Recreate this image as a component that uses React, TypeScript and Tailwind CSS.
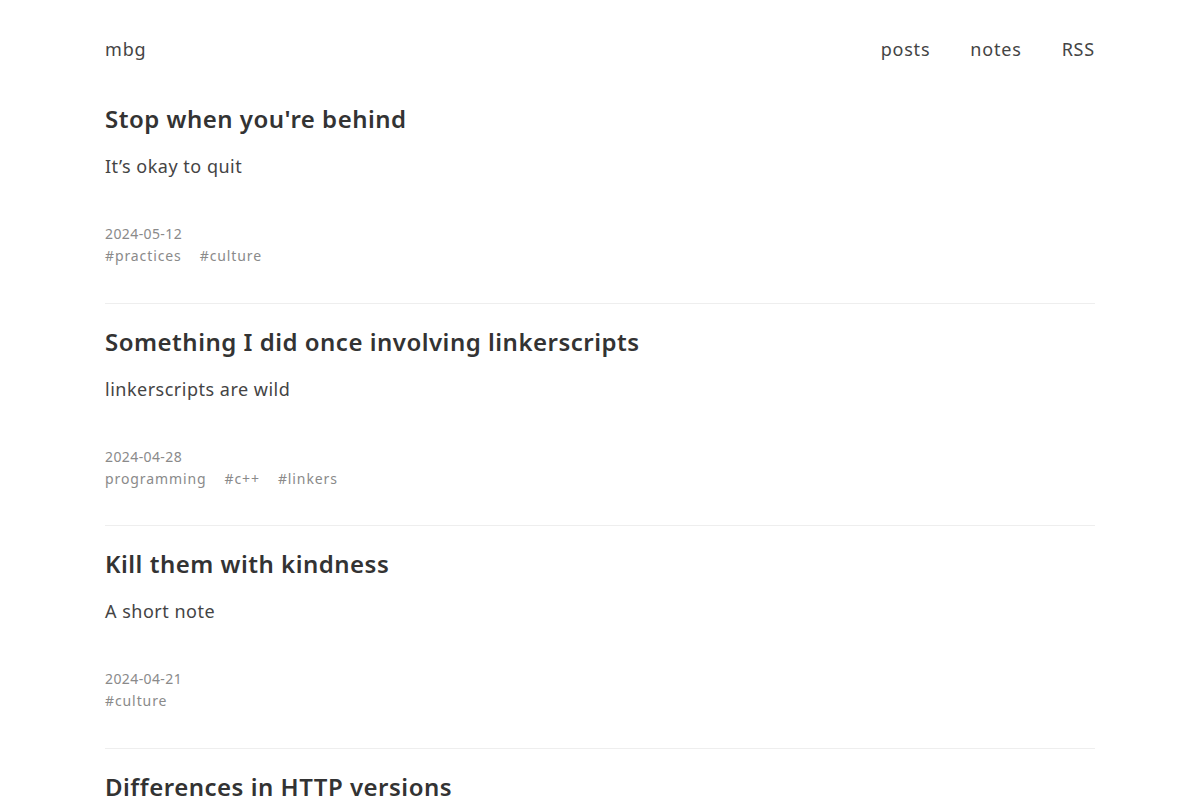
const posts = [
  { title: "Stop when you're behind", desc: 'It’s okay to quit', date: '2024-05-12', tags: ['#practices', '#culture'] },
  { title: 'Something I did once involving linkerscripts', desc: 'linkerscripts are wild', date: '2024-04-28', tags: ['programming', '#c++', '#linkers'] },
  { title: 'Kill them with kindness', desc: 'A short note', date: '2024-04-21', tags: ['#culture'] },
  { title: 'Differences in HTTP versions', desc: 'What changed between them', date: '2024-04-10', tags: ['#networking'] },
]

export default function App() {
  return (
    <div className="min-h-screen bg-white text-[#333]" style={{ fontFamily: '"Noto Sans", sans-serif' }}>
      <div className="mx-auto w-[990px]">
        <header className="flex h-[62px] items-end justify-between">
          <a className="text-[18px] leading-[26px] tracking-[0.8px] text-[#444]">mbg</a>
          <nav className="flex gap-[40px] text-[18px] leading-[26px] tracking-[0.8px] text-[#444]">
            <a>posts</a>
            <a>notes</a>
            <a>RSS</a>
          </nav>
        </header>
        <main className="mt-[41px]">
          {posts.map((p, i) => (
            <article key={i} className={i > 0 ? 'border-t border-[#eee] pt-[22px]' : ''}>
              <h2 className="text-[24px] font-semibold leading-[32px] tracking-[0.5px] text-[#333]">{p.title}</h2>
              <p className="mt-[17px] text-[18px] leading-[28px] tracking-[0.5px] text-[#444]">{p.desc}</p>
              <div className="mt-[44px] text-[14px] leading-[20px] tracking-[0.4px] text-[#8a8a8a]">{p.date}</div>
              <div className="mt-[2px] flex gap-[18px] text-[14px] leading-[20px] tracking-[0.9px] text-[#8a8a8a]">
                {p.tags.map(t => <span key={t}>{t}</span>)}
              </div>
              <div className="h-[36.5px]" />
            </article>
          ))}
        </main>
      </div>
    </div>
  )
}
